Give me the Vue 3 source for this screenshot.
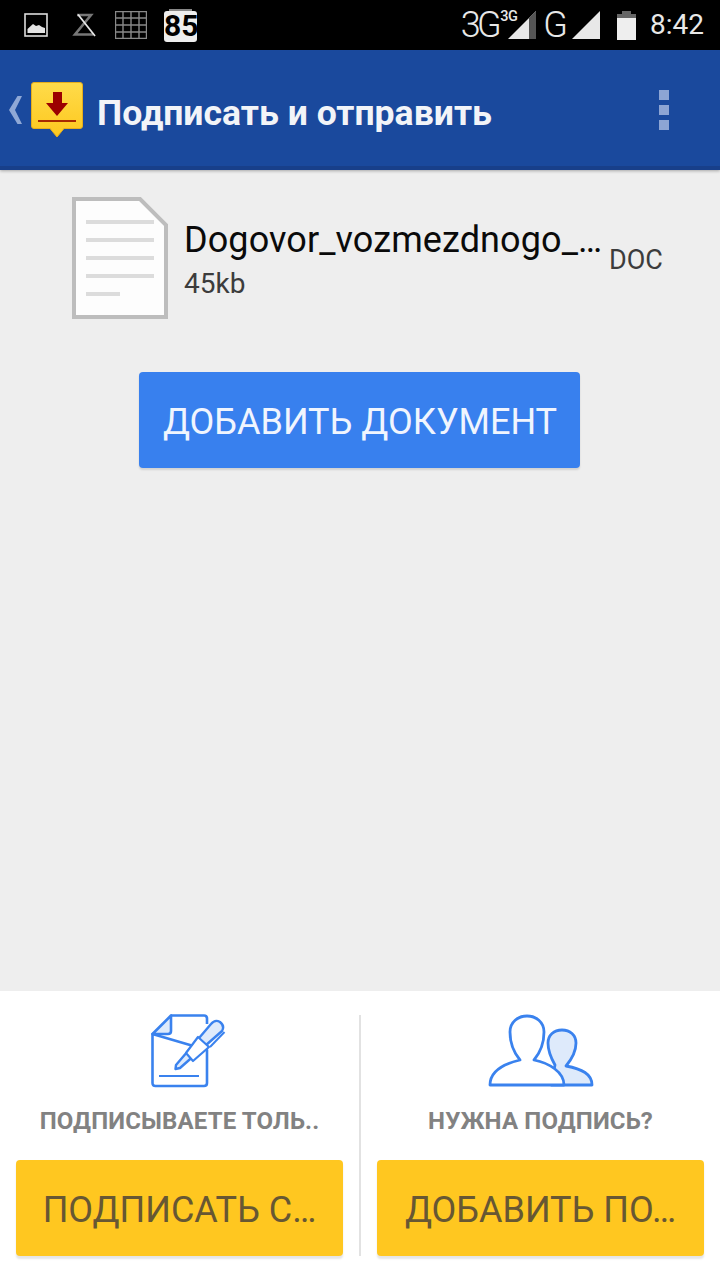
<template>
  <div class="screen">
    <div class="statusbar">
      <div class="status-left">
        <svg class="ic-image" width="24" height="24" viewBox="0 0 24 24">
          <rect x="1" y="1" width="22" height="22" fill="none" stroke="#ddd" stroke-width="1.6" />
          <path d="M3.5 20 V16 L9 11 L12 13 L15 12 L18 14 L21 15 V20 Z" fill="#e4e4e4" />
        </svg>
        <svg class="ic-hour" width="24" height="26" viewBox="0 0 24 26">
          <path d="M5 3 H19 L3 22.5 H21" fill="none" stroke="#777" stroke-width="2.6" />
          <path d="M6 2.5 L23 24" stroke="#e8e8e8" stroke-width="1.8" />
        </svg>
        <svg class="ic-grid" width="32" height="28" viewBox="0 0 32 28">
          <path d="M.5.5H31.5V27.5H.5ZM8 .5V27.5M16 .5V27.5M24 .5V27.5M.5 7H31.5M.5 14H31.5M.5 21H31.5" fill="none" stroke="#888" stroke-width="1.4" />
        </svg>
        <div class="badge">85</div>
      </div>
      <div class="status-right">
        <span class="net net-3g">3G</span>
        <span class="net-small">3G</span>
        <svg class="signal" width="29" height="29" viewBox="0 0 29 29">
          <path d="M0 28 L28 0 V28 Z" fill="#e8e8e8" />
          <path d="M21 7 L28 0 V28 H21 Z" fill="#555" />
        </svg>
        <span class="net net-g">G</span>
        <svg class="signal-g" width="29" height="29" viewBox="0 0 29 29">
          <path d="M0 28 L28 0 V28 Z" fill="#e8e8e8" />
        </svg>
        <svg class="battery" width="19" height="29" viewBox="0 0 19 29">
          <path d="M5 0 H14 V3 H19 V7 H0 V3 H5 Z" fill="#666" />
          <rect x="0" y="7" width="19" height="22" fill="#eee" />
        </svg>
        <span class="time">8:42</span>
      </div>
    </div>

    <header class="appbar">
      <svg class="back" width="16" height="28" viewBox="0 0 16 28">
        <path d="M14 0 H9.5 L1 14 L9.5 28 H14 L7 14 Z" fill="#8fa8d6" />
      </svg>
      <svg class="logo" width="52" height="56" viewBox="0 0 52 56">
        <defs>
          <linearGradient id="logoFill" x1="0" y1="0" x2="0" y2="1">
            <stop offset="0" stop-color="#ffdb4a" />
            <stop offset="1" stop-color="#fdc81e" />
          </linearGradient>
        </defs>
        <path d="M3 0.5 H49 Q51.5 0.5 51.5 3 V44 Q51.5 46.5 49 46.5 H33 L26 55 L19 46.5 H3 Q0.5 46.5 0.5 44 V3 Q0.5 0.5 3 0.5 Z" fill="url(#logoFill)" stroke="#e5ad1c" />
        <path d="M22 10 H31 V21 H37 L26 34 L15 21 H22 Z" fill="#9c0000" />
        <rect x="7" y="38" width="38" height="2" fill="#a82a00" />
      </svg>
      <h1 class="title">Подписать и отправить</h1>
      <div class="menu">
        <i></i><i></i><i></i>
      </div>
    </header>

    <main class="content">
      <div class="doc">
        <svg class="doc-icon" width="96" height="122" viewBox="0 0 96 122">
          <path d="M2 2 H68 L94 28 V120 H2 Z" fill="#fdfdfd" stroke="#bdbdbd" stroke-width="4" />
          <path d="M14 25 H82 M14 43 H82 M14 61 H82 M14 79 H82" stroke="#dcdcdc" stroke-width="4" />
          <path d="M14 97 H48" stroke="#dcdcdc" stroke-width="4" />
        </svg>
        <div class="doc-text">
          <div class="doc-name">Dogovor_vozmezdnogo_…</div>
          <div class="doc-size">45kb</div>
        </div>
        <div class="doc-type">DOC</div>
      </div>
      <button class="btn-add">ДОБАВИТЬ ДОКУМЕНТ</button>
    </main>

    <footer class="actions">
      <section class="action">
        <svg class="action-icon icon-sign" width="76" height="74" viewBox="0 0 76 74">
          <path d="M21 1.5 H54 Q57 1.5 57 4.5 V10 M57 36 V69 Q57 72 54 72 H5.5 Q2.5 72 2.5 69 V20 Z" fill="#fff" stroke="#3a82ee" stroke-width="2.6" stroke-linejoin="round" />
          <path d="M21 1.5 V17 Q21 20 18 20 H2.5 Z" fill="#deeafb" stroke="#3a82ee" stroke-width="2.6" stroke-linejoin="round" />
          <path d="M9 62 H49" stroke="#3a82ee" stroke-width="2.2" />
          <path d="M25.5 55 L26 51 L61 10 Q65 5 70 8 Q75 12 72 17 L30 54 Z" fill="#deeafb" stroke="#3a82ee" stroke-width="2.4" stroke-linejoin="round" />
          <path d="M36 39 L43 47 L59 33 L48 23 Z" fill="#fff" stroke="#3a82ee" stroke-width="2.2" stroke-linejoin="round" />
          <path d="M74.5 18 L60 33" fill="none" stroke="#3a82ee" stroke-width="2" />
        </svg>
        <div class="action-label">ПОДПИСЫВАЕТЕ ТОЛЬ..</div>
        <button class="btn-yellow">ПОДПИСАТЬ С…</button>
      </section>
      <div class="divider"></div>
      <section class="action">
        <svg class="action-icon" width="108" height="74" viewBox="0 0 108 74">
          <path d="M64 71 H105 C105 60 95 55 79 52 C84 46 89 38 89 29 C89 21 83 16 75 16 C67 16 61 21 61 29 C61 37 64 44 68 51 Z" fill="#deeafb" stroke="#3a82ee" stroke-width="2.8" stroke-linejoin="round" />
          <path d="M3 71 C3 58 16 50 33 46 C28 40 23 30 23 18 C23 8 31 2 40 2 C49 2 57 8 57 18 C57 30 52 40 47 46 C62 49 77 58 77 71 Z" fill="#fff" stroke="#3a82ee" stroke-width="2.8" stroke-linejoin="round" />
        </svg>
        <div class="action-label">НУЖНА ПОДПИСЬ?</div>
        <button class="btn-yellow">ДОБАВИТЬ ПО…</button>
      </section>
    </footer>
  </div>
</template>

<script setup>
</script>

<style>
html, body {
  margin: 0;
  background: #eeeeee;
}
</style>

<style scoped>
.screen {
  width: 720px;
  height: 1280px;
  display: flex;
  flex-direction: column;
  background: #eeeeee;
  font-family: Roboto, "Liberation Sans", sans-serif;
  overflow: hidden;
}

.statusbar {
  height: 50px;
  flex: none;
  background: #000;
  display: flex;
  justify-content: space-between;
  align-items: center;
  color: #e8e8e8;
}

.status-left {
  display: flex;
  align-items: center;
  padding-left: 24px;
}

.ic-hour {
  margin-left: 24px;
}

.ic-grid {
  margin-left: 19px;
}

.badge {
  margin-left: 17px;
  width: 33px;
  height: 31px;
  margin-top: 2px;
  border-radius: 3px;
  background: #eee;
  color: #000;
  font-size: 30px;
  font-weight: 700;
  line-height: 30px;
  text-align: center;
  position: relative;
}

.badge::before {
  content: "";
  position: absolute;
  left: 5px;
  right: 5px;
  top: -2px;
  height: 2px;
  background: #888;
}

.status-right {
  display: flex;
  align-items: center;
  padding-right: 16px;
}

.net {
  font-size: 36px;
  font-weight: 300;
  line-height: 50px;
}

.net-3g {
  letter-spacing: -3.5px;
}

.net-small {
  font-size: 14.5px;
  font-weight: 500;
  align-self: flex-start;
  line-height: 34px;
  margin-left: 2px;
  letter-spacing: -0.5px;
}

.signal {
  margin-left: -9px;
}

.net-g {
  margin-left: 6px;
}

.signal-g {
  margin-left: 4px;
}

.battery {
  margin-left: 16px;
}

.time {
  font-size: 28px;
  margin-left: 14px;
  line-height: 50px;
}

.appbar {
  height: 120px;
  flex: none;
  background: #1a499d;
  border-bottom: 4px solid #183f8a;
  box-sizing: border-box;
  box-shadow: 0 1px 3px rgba(0, 0, 0, 0.3);
  display: flex;
  align-items: center;
  position: relative;
  z-index: 1;
}

.back {
  margin-left: 8px;
  margin-top: 4px;
}

.logo {
  margin-left: 7px;
  margin-top: 4px;
}

.title {
  margin: 9px 0 0 14px;
  color: #f2f4f8;
  font-size: 35.6px;
  font-weight: 700;
  flex: 1;
}

.menu {
  display: flex;
  flex-direction: column;
  gap: 5px;
  margin: 4px 51px 0 0;
}

.menu i {
  display: block;
  width: 10px;
  height: 10px;
  background: #8da5d4;
}

.content {
  flex: 1;
  display: flex;
  flex-direction: column;
  align-items: center;
}

.doc {
  align-self: stretch;
  display: flex;
  align-items: flex-start;
  padding: 27px 0 0 72px;
  height: 202px;
  box-sizing: border-box;
}

.doc-text {
  margin-left: 16px;
  width: 425px;
}

.doc-name {
  margin-top: 21px;
  font-size: 36px;
  line-height: 44px;
  color: #0a0a0a;
  letter-spacing: 0.1px;
  white-space: nowrap;
}

.doc-size {
  margin-top: 4px;
  font-size: 28px;
  line-height: 36px;
  color: #3c3c3c;
}

.doc-type {
  margin-top: 46px;
  font-size: 27px;
  line-height: 34px;
  color: #3c3c3c;
}

.btn-add {
  width: 441px;
  height: 96px;
  margin-right: 2px;
  border: none;
  border-radius: 4px;
  background: #3880ee;
  color: #f0f5fe;
  font-family: inherit;
  font-size: 36px;
  padding: 4px 0 0 2px;
  box-shadow: 0 2px 2px rgba(0, 0, 0, 0.12);
}

.actions {
  height: 289px;
  flex: none;
  background: #fff;
  display: flex;
  padding-top: 23px;
  box-sizing: border-box;
}

.action {
  flex: 1;
  display: flex;
  flex-direction: column;
  align-items: center;
  min-width: 0;
}

.action-icon {
  display: block;
}

.icon-sign {
  margin-left: 17px;
}

.action-label {
  margin-top: 19px;
  font-size: 24px;
  line-height: 28px;
  font-weight: 700;
  letter-spacing: 0.15px;
  color: #828282;
}

.btn-yellow {
  margin-top: 25px;
  width: 327px;
  height: 96px;
  border: none;
  border-radius: 4px;
  background: #ffc720;
  color: #675733;
  font-family: inherit;
  font-size: 36px;
  padding: 4px 0 0 0;
  box-shadow: 0 3px 2px rgba(0, 0, 0, 0.1);
}

.divider {
  width: 2px;
  height: 241px;
  margin-top: 1px;
  flex: none;
  background: #e2e2e2;
}
</style>
